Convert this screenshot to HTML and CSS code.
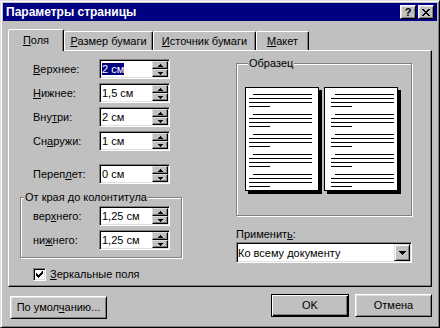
FILE: index.html
```html
<!DOCTYPE html>
<html lang="ru">
<head>
    <meta charset="UTF-8">
    <title>Параметры страницы</title>
    <link rel="stylesheet" href="styles.css">
</head>
<body>
    <div class="window">
        <div class="titlebar">
            <span class="title">Параметры страницы</span>
            <span class="caption-btn">?</span>
            <span class="caption-btn">
                <svg width="8" height="7" viewBox="0 0 8 7"><path d="M0 0h2v1h1v1h2v-1h1v-1h2v1h-1v1h-1v1h-1v1h1v1h1v1h1v1h-2v-1h-1v-1h-2v1h-1v1h-2v-1h1v-1h1v-1h1v-1h-1v-1h-1v-1h-1z" fill="#000"/></svg>
            </span>
        </div>

        <div class="dialog">
            <div class="tabs">
                <div class="tab tab-active tab-margins"><u>П</u>оля</div>
                <div class="tab tab-paper"><u>Р</u>азмер бумаги</div>
                <div class="tab tab-source"><u>И</u>сточник бумаги</div>
                <div class="tab tab-layout"><u>М</u>акет</div>
            </div>

            <div class="panel">
                <div class="col-left">
                    <div class="field">
                        <label><u>В</u>ерхнее:</label>
                        <div class="spin">
                            <span class="value"><span class="selected">2 см</span></span>
                            <span class="spin-btns"><span class="up"></span><span class="down"></span></span>
                        </div>
                    </div>
                    <div class="field">
                        <label><u>Н</u>ижнее:</label>
                        <div class="spin">
                            <span class="value">1,5 см</span>
                            <span class="spin-btns"><span class="up"></span><span class="down"></span></span>
                        </div>
                    </div>
                    <div class="field">
                        <label>Вну<u>т</u>ри:</label>
                        <div class="spin">
                            <span class="value">2 см</span>
                            <span class="spin-btns"><span class="up"></span><span class="down"></span></span>
                        </div>
                    </div>
                    <div class="field">
                        <label>Сн<u>а</u>ружи:</label>
                        <div class="spin">
                            <span class="value">1 см</span>
                            <span class="spin-btns"><span class="up"></span><span class="down"></span></span>
                        </div>
                    </div>
                    <div class="field field-gutter">
                        <label>Переп<u>л</u>ет:</label>
                        <div class="spin">
                            <span class="value">0 см</span>
                            <span class="spin-btns"><span class="up"></span><span class="down"></span></span>
                        </div>
                    </div>

                    <fieldset class="group">
                        <legend class="group-title">От края до колонтитула</legend>
                        <div class="field">
                            <label>вер<u>х</u>него:</label>
                            <div class="spin">
                                <span class="value">1,25 см</span>
                                <span class="spin-btns"><span class="up"></span><span class="down"></span></span>
                            </div>
                        </div>
                        <div class="field">
                            <label>ни<u>ж</u>него:</label>
                            <div class="spin">
                                <span class="value">1,25 см</span>
                                <span class="spin-btns"><span class="up"></span><span class="down"></span></span>
                            </div>
                        </div>
                    </fieldset>

                    <div class="check-row">
                        <span class="checkbox">
                            <svg width="7" height="7" viewBox="0 0 7 7"><path d="M6 0h1v3h-1v1h-1v1h-1v1h-1v1h-1v-1h-1v-1h-1v-3h1v1h1v1h1v-1h1v-1h1z" fill="#000"/></svg>
                        </span>
                        <span><u>З</u>еркальные поля</span>
                    </div>
                </div>

                <div class="col-right">
                    <fieldset class="group sample">
                        <legend class="group-title">Образец</legend>
                        <div class="pages">
                            <div class="page page-left">
                                <div class="para"><i class="first"></i><i></i><i></i><i class="last"></i></div>
                                <div class="para"><i class="first"></i><i></i><i></i><i class="last"></i></div>
                                <div class="para"><i class="first"></i><i></i><i></i><i class="last"></i></div>
                                <div class="para"><i class="first"></i><i></i><i></i><i class="last"></i></div>
                                <div class="para"><i class="first"></i><i></i><i></i><i class="last"></i></div>
                            </div>
                            <div class="page page-right">
                                <div class="para"><i class="first"></i><i></i><i></i><i class="last"></i></div>
                                <div class="para"><i class="first"></i><i></i><i></i><i class="last"></i></div>
                                <div class="para"><i class="first"></i><i></i><i></i><i class="last"></i></div>
                                <div class="para"><i class="first"></i><i></i><i></i><i class="last"></i></div>
                                <div class="para"><i class="first"></i><i></i><i></i><i class="last"></i></div>
                            </div>
                        </div>
                    </fieldset>

                    <div class="apply-label">Применит<u>ь</u>:</div>
                    <div class="combo">
                        <span class="value">Ко всему документу</span>
                        <span class="combo-btn">
                            <svg width="7" height="4" viewBox="0 0 7 4"><path d="M0 0h7v1h-1v1h-1v1h-1v1h-1v-1h-1v-1h-1v-1h-1z" fill="#000"/></svg>
                        </span>
                    </div>
                </div>
            </div>

            <div class="actions">
                <button class="btn btn-defaults">По умол<u>ч</u>анию...</button>
                <button class="btn btn-ok">OK</button>
                <button class="btn btn-cancel">Отмена</button>
            </div>
        </div>
    </div>
</body>
</html>
```

FILE: styles.css
```css
* {
    box-sizing: border-box;
}
body {
    margin: 0;
    font-family: "Liberation Sans", Arial, sans-serif;
    font-size: 11px;
    line-height: 13px;
    color: #000;
    background: #c0c0c0;
}
.window {
    width: 440px;
    height: 328px;
    padding: 2px;
    background: #c0c0c0;
    border: 1px solid;
    border-color: #dfdfdf #000 #000 #dfdfdf;
    box-shadow: inset 1px 1px #fff, inset -1px -1px #808080;
}

/* title bar */
.titlebar {
    height: 18px;
    display: flex;
    align-items: center;
    padding: 0 3px 0 3px;
    background: #000080;
    color: #fff;
}
.title {
    flex: 1;
    font-weight: bold;
    font-size: 12px;
}
.caption-btn {
    width: 16px;
    height: 14px;
    margin-left: 2px;
    display: flex;
    align-items: center;
    justify-content: center;
    background: #c0c0c0;
    color: #000;
    font-weight: bold;
    font-size: 11px;
    border: 1px solid;
    border-color: #fff #000 #000 #fff;
    box-shadow: inset 1px 1px #dfdfdf, inset -1px -1px #808080;
}

.dialog {
    padding: 8px 5px 0 5px;
}

/* tabs */
.tabs {
    display: flex;
    align-items: flex-end;
    height: 21px;
}
.tab {
    height: 19px;
    padding-top: 3px;
    text-align: center;
    border: 1px solid;
    border-bottom: none;
    border-color: #fff #000 transparent #fff;
    border-radius: 2px 2px 0 0;
    box-shadow: inset -1px 0 #808080;
}
.tab-active {
    position: relative;
    height: 22px;
    margin-bottom: -1px;
    padding-top: 4px;
    background: #c0c0c0;
}
.tab-margins { width: 56px; }
.tab-paper { width: 89px; }
.tab-source { width: 103px; }
.tab-layout { width: 53px; }

.panel {
    height: 237px;
    display: flex;
    padding: 8px 0 0 11px;
    border: 1px solid;
    border-color: #fff #000 #000 #fff;
    box-shadow: inset -1px -1px #808080;
}
.col-left {
    width: 162px;
}
.col-right {
    width: 176px;
    margin-left: 54px;
}

/* spin fields */
.field {
    display: flex;
    align-items: center;
    height: 20px;
    margin-bottom: 4px;
    padding-left: 13px;
}
.field label {
    width: 66px;
}
.field-gutter {
    margin-top: 13px;
}
.spin, .combo {
    display: flex;
    padding: 1px;
    background: #fff;
    border: 1px solid;
    border-color: #808080 #fff #fff #808080;
    box-shadow: inset 1px 1px #000, inset -1px -1px #dfdfdf;
}
.spin {
    width: 71px;
    height: 20px;
}
.value {
    flex: 1;
    padding-left: 1px;
    line-height: 16px;
}
.selected {
    background: #000080;
    color: #fff;
}
.spin-btns {
    width: 16px;
    display: flex;
    flex-direction: column;
}
.spin-btns span {
    flex: 1;
    display: flex;
    align-items: center;
    justify-content: center;
    background: #c0c0c0;
    border: 1px solid;
    border-color: #dfdfdf #000 #000 #dfdfdf;
    box-shadow: inset -1px -1px #808080;
}
.spin-btns span::after {
    content: "";
    width: 1px;
    height: 1px;
    background: #000;
}
.spin-btns .up::after {
    margin-top: -2px;
    box-shadow: -1px 1px #000, 0 1px #000, 1px 1px #000,
        -2px 2px #000, -1px 2px #000, 0 2px #000, 1px 2px #000, 2px 2px #000;
}
.spin-btns .down::after {
    margin-top: 2px;
    box-shadow: -1px -1px #000, 0 -1px #000, 1px -1px #000,
        -2px -2px #000, -1px -2px #000, 0 -2px #000, 1px -2px #000, 2px -2px #000;
}

/* group boxes */
.group {
    min-width: 0;
    margin: 7px 0 0;
    padding: 2px 0 3px;
    border: 1px solid #808080;
    box-shadow: inset 1px 1px #fff, 1px 1px #fff;
}
.group .field {
    padding-left: 12px;
}
.group-title {
    margin-left: 3px;
    padding: 0 1px;
    background: #c0c0c0;
}

.check-row {
    display: flex;
    align-items: center;
    gap: 4px;
    margin-top: 10px;
    padding-left: 13px;
}
.checkbox {
    width: 13px;
    height: 13px;
    display: flex;
    align-items: center;
    justify-content: center;
    background: #fff;
    border: 1px solid;
    border-color: #808080 #fff #fff #808080;
    box-shadow: inset 1px 1px #000, inset -1px -1px #dfdfdf;
}

/* sample pages */
.sample {
    margin-top: -2px;
    padding: 17px 0 24px 8px;
}
.pages {
    display: flex;
    gap: 5px;
}
.page {
    width: 74px;
    height: 104px;
    padding-top: 6px;
    background: #fff;
    border: 1px solid #000;
    box-shadow: 3px 3px 0 #000;
}
.page-left { padding-left: 3px; }
.page-right { padding-left: 6px; }
.para {
    margin-bottom: 7px;
}
.para i {
    display: block;
    width: 63px;
    height: 1px;
    margin-bottom: 3px;
    background: #000;
}
.para i.first {
    width: 59px;
    margin-left: 4px;
}
.para i.last {
    width: 21px;
    margin-bottom: 0;
}

.apply-label {
    margin: 12px 0 1px;
}
.combo {
    height: 21px;
    align-items: center;
}
.combo .value {
    padding-left: 0;
}
.combo-btn {
    width: 16px;
    height: 17px;
    display: flex;
    align-items: center;
    justify-content: center;
    background: #c0c0c0;
    border: 1px solid;
    border-color: #dfdfdf #000 #000 #dfdfdf;
    box-shadow: inset 1px 1px #fff, inset -1px -1px #808080;
}

/* bottom buttons */
.actions {
    display: flex;
    align-items: flex-start;
    margin-top: 7px;
    padding-left: 2px;
}
.btn {
    height: 23px;
    padding: 0;
    font: inherit;
    color: #000;
    background: #c0c0c0;
    border: 1px solid;
    border-color: #fff #000 #000 #fff;
    box-shadow: inset 1px 1px #dfdfdf, inset -1px -1px #808080;
}
.btn-defaults {
    width: 97px;
    margin: 2px auto 0 0;
}
.btn-ok {
    width: 78px;
    border-color: #000;
    box-shadow: inset 1px 1px #fff, inset -1px -1px #000, inset -2px -2px #808080;
}
.btn-cancel {
    width: 77px;
    margin-left: 6px;
}
```
